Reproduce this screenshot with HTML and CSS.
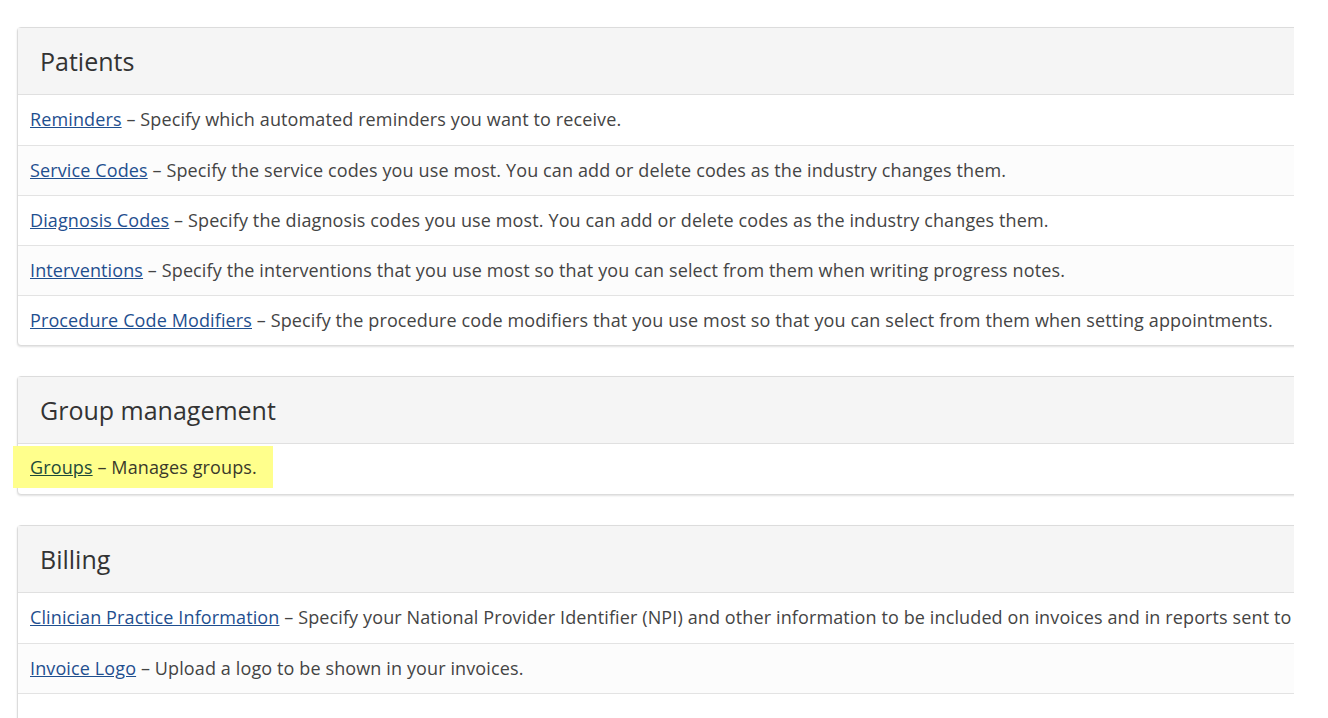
FILE: index.html
```html
<!DOCTYPE html>
<html lang="en">
<head>
  <meta charset="UTF-8" />
  <title>Settings</title>
  <link rel="stylesheet" href="styles.css">
</head>
<body>
  <div class="page">
    <div class="panel">
      <div class="panel-heading">Patients</div>
      <div class="row"><a href="#">Reminders</a> – Specify which automated reminders you want to receive.</div>
      <div class="row"><a href="#">Service Codes</a> – Specify the service codes you use most. You can add or delete codes as the industry changes them.</div>
      <div class="row"><a href="#">Diagnosis Codes</a> – Specify the diagnosis codes you use most. You can add or delete codes as the industry changes them.</div>
      <div class="row"><a href="#">Interventions</a> – Specify the interventions that you use most so that you can select from them when writing progress notes.</div>
      <div class="row"><a href="#">Procedure Code Modifiers</a> – Specify the procedure code modifiers that you use most so that you can select from them when setting appointments.</div>
    </div>

    <div class="panel">
      <div class="panel-heading">Group management</div>
      <div class="row"><span class="marker"><a href="#">Groups</a> – Manages groups.</span></div>
    </div>

    <div class="panel">
      <div class="panel-heading">Billing</div>
      <div class="row"><a href="#">Clinician Practice Information</a> – Specify your National Provider Identifier (NPI) and other information to be included on invoices and in reports sent to</div>
      <div class="row"><a href="#">Invoice Logo</a> – Upload a logo to be shown in your invoices.</div>
      <div class="row"></div>
    </div>
  </div>
</body>
</html>
```

FILE: styles.css
```css
body {
  margin: 0;
  background: #fff;
  font-family: "Open Sans", "Noto Sans", sans-serif;
  color: #444;
}

.page {
  width: 1294px;
  height: 718px;
  overflow: hidden;
  padding: 27px 0 0 17px;
  box-sizing: border-box;
}

.panel {
  width: 1500px;
  border: 1px solid #dcdcdc;
  border-radius: 4px;
  background: #fff;
  box-shadow: 0 1px 2px rgba(0, 0, 0, 0.12);
  margin-bottom: 30px;
}

.panel-heading {
  height: 66px;
  line-height: 66px;
  padding-left: 22px;
  font-size: 25px;
  color: #333;
  background: #f5f5f5;
  border-bottom: 1px solid #e0e0e0;
}

.row {
  height: 49px;
  line-height: 49px;
  padding-left: 12px;
  font-size: 18px;
  letter-spacing: 0.12px;
  white-space: nowrap;
  border-top: 1px solid #e3e3e3;
}

.panel-heading + .row {
  border-top: none;
  height: 50px;
}

.row:nth-child(odd) {
  background: #fcfcfc;
}

.row a {
  color: #1f4f8f;
  text-decoration: underline;
}

.marker {
  display: inline-block;
  margin-left: -17px;
  padding: 0 16px 0 17px;
  height: 42px;
  line-height: 42px;
  vertical-align: top;
  margin-top: 2px;
  background: #ffff8c;
  color: #3a3a2a;
}

.marker a {
  color: #1d4a3a;
}
```
